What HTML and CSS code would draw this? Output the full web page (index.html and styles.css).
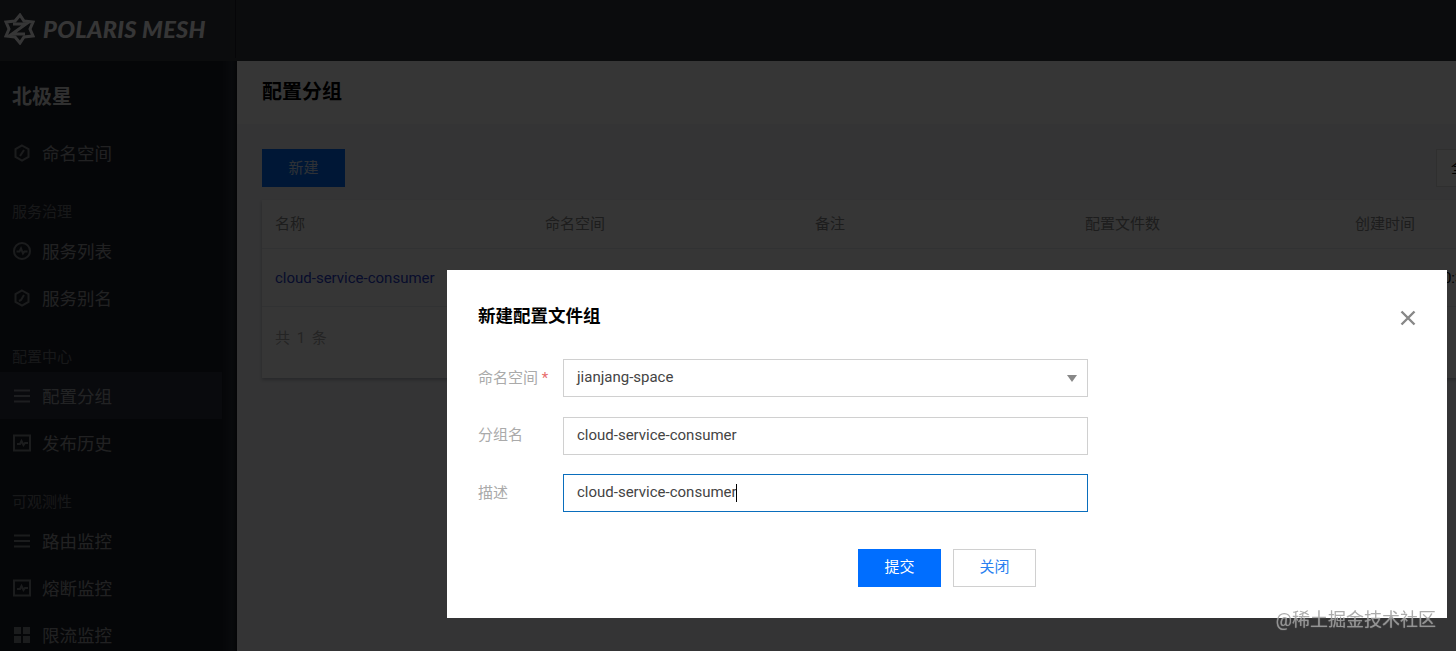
FILE: index.html
```html
<!DOCTYPE html>
<html>
<head>
	<title>配置分组</title>
	<meta charset="UTF-8">
	<link rel="stylesheet" href="styles.css">
</head>
<body>
	<div class="app">
		<header class="topbar">
			<div class="logo">
				<svg class="logo-mark" viewBox="0 0 32 32" width="32" height="32" fill="none" stroke="#fff" stroke-width="3" stroke-linejoin="miter">
					<path d="M17 2l4 6 9 1-3 7 3 7-9 1-4 6-5-6-9-1 3-7-3-7 9-1z"/>
					<path d="M10 11h13l-14 10h13"/>
				</svg>
				<span class="logo-text">POLARIS MESH</span>
			</div>
		</header>
		<div class="body">
			<nav class="sidebar">
				<div class="brand">北极星</div>
				<a class="nav-item">
					<svg class="nav-icon" viewBox="0 0 18 18"><path d="M9 1.5l6.5 3.7v7.6L9 16.5l-6.5-3.7V5.2z"/><path d="M11 6l-4 6"/></svg>
					命名空间
				</a>
				<div class="nav-group">服务治理</div>
				<a class="nav-item">
					<svg class="nav-icon" viewBox="0 0 18 18"><circle cx="9" cy="9" r="8"/><path d="M3.5 9.5h3l1.5-3 2 5 1.5-2h3"/></svg>
					服务列表
				</a>
				<a class="nav-item">
					<svg class="nav-icon" viewBox="0 0 18 18"><path d="M9 1.5l6.5 3.7v7.6L9 16.5l-6.5-3.7V5.2z"/><path d="M11 6l-3 5-2 1"/></svg>
					服务别名
				</a>
				<div class="nav-group">配置中心</div>
				<a class="nav-item active">
					<svg class="nav-icon" viewBox="0 0 18 18"><path d="M1 3.5h16M1 9h16M1 14.5h16"/></svg>
					配置分组
				</a>
				<a class="nav-item">
					<svg class="nav-icon" viewBox="0 0 18 18"><path d="M1 1.5h16v15H1z"/><path d="M4 10h3l1.5-3 2 4 1.5-2h3"/></svg>
					发布历史
				</a>
				<div class="nav-group">可观测性</div>
				<a class="nav-item">
					<svg class="nav-icon" viewBox="0 0 18 18"><path d="M1 3.5h16M1 9h16M1 14.5h16"/></svg>
					路由监控
				</a>
				<a class="nav-item">
					<svg class="nav-icon" viewBox="0 0 18 18"><path d="M1 1.5h16v15H1z"/><path d="M4 10h3l1.5-3 2 4 1.5-2h3"/></svg>
					熔断监控
				</a>
				<a class="nav-item">
					<svg class="nav-icon solid" viewBox="0 0 18 18"><path d="M1 1h7v7H1zM10 1h7v7h-7zM1 10h7v7H1zM10 10h7v7h-7z"/></svg>
					限流监控
				</a>
			</nav>
			<main class="main">
				<div class="page-title">配置分组</div>
				<div class="content">
					<div class="toolbar">
						<button class="btn-new">新建</button>
						<div class="search-box">全部</div>
					</div>
					<div class="card">
						<div class="row head">
							<div>名称</div>
							<div>命名空间</div>
							<div>备注</div>
							<div>配置文件数</div>
							<div>创建时间</div>
						</div>
						<div class="row data">
							<div class="link">cloud-service-consumer</div>
							<div>jianjang-space</div>
							<div>-</div>
							<div>0</div>
							<div>2022-05-10 10:32:16</div>
						</div>
						<div class="card-foot">共 1 条</div>
					</div>
				</div>
			</main>
		</div>
	</div>

	<div class="mask"></div>

	<div class="dialog">
		<div class="dialog-head">
			<h3>新建配置文件组</h3>
			<svg class="dialog-close" viewBox="0 0 16 16" width="16" height="16"><path d="M1.5 1.5l13 13M14.5 1.5l-13 13"/></svg>
		</div>
		<div class="form">
			<label>命名空间 <em>*</em></label>
			<div class="field select">jianjang-space<i class="caret"></i></div>
			<label>分组名</label>
			<div class="field">cloud-service-consumer</div>
			<label>描述</label>
			<div class="field focus">cloud-service-consumer<i class="cursor"></i></div>
		</div>
		<div class="dialog-foot">
			<button class="btn primary">提交</button>
			<button class="btn plain">关闭</button>
		</div>
	</div>

	<div class="watermark">@稀土掘金技术社区</div>
</body>
</html>
```

FILE: styles.css
```css
* {
	box-sizing: border-box;
}

html, body {
	margin: 0;
	height: 100%;
	overflow: hidden;
}

body {
	font-family: Roboto, "Noto Sans CJK SC", sans-serif;
	color: #000;
	background: #f3f4f7;
}

.app {
	height: 651px;
	display: flex;
	flex-direction: column;
}

.topbar {
	height: 61px;
	flex: none;
	background: #34383f;
}

.logo {
	width: 236px;
	height: 58px;
	padding-left: 3px;
	display: flex;
	align-items: center;
	gap: 8px;
	border-right: 1px solid #1c1f28;
}

.logo-text {
	font-family: Lato, sans-serif;
	font-size: 23.5px;
	font-weight: 900;
	font-style: italic;
	letter-spacing: .3px;
	color: #fff;
}

.body {
	flex: 1;
	display: flex;
	min-height: 0;
}

.sidebar {
	width: 237px;
	flex: none;
	background: linear-gradient(to right, #1a1e27 222px, #2a303c 232px, #1a1e27);
	color: rgba(255, 255, 255, .58);
}

.brand {
	height: 68px;
	padding: 21px 0 0 12px;
	font-size: 20px;
	font-weight: 700;
	line-height: 30px;
	color: rgba(255, 255, 255, .9);
}

.nav-item {
	width: 222px;
	height: 47px;
	padding-left: 13px;
	display: flex;
	align-items: center;
	gap: 11px;
	font-size: 17.5px;
}

.nav-item.active {
	background: #2b2f3e;
}

.nav-icon {
	width: 18px;
	height: 18px;
	fill: none;
	stroke: rgba(255, 255, 255, .45);
	stroke-width: 2;
}

.nav-icon.solid {
	fill: rgba(255, 255, 255, .45);
	stroke: none;
}

.nav-group {
	height: 51px;
	padding: 25px 0 0 12px;
	font-size: 15px;
	line-height: 22px;
	color: rgba(255, 255, 255, .38);
}

.main {
	flex: 1;
	min-width: 0;
}

.page-title {
	height: 63px;
	padding-left: 25px;
	font-size: 20px;
	font-weight: 700;
	line-height: 62px;
	background: #fff;
}

.content {
	padding: 25px 0 0 25px;
}

.toolbar {
	height: 38px;
	display: flex;
	justify-content: space-between;
}

.btn-new {
	width: 83px;
	height: 38px;
	padding-bottom: 4px;
	border: 0;
	background: #006eff;
	color: #d8e6ff;
	font: 15px Roboto, "Noto Sans CJK SC", sans-serif;
}

.search-box {
	width: 100px;
	height: 38px;
	margin-right: -80px;
	padding-left: 14px;
	line-height: 36px;
	font-size: 15px;
	background: #fff;
	border: 1px solid #ddd;
}

.card {
	width: 1300px;
	height: 178px;
	margin-top: 13px;
	background: #fff;
	box-shadow: 0 2px 3px rgba(54, 58, 80, .3);
	font-size: 15px;
}

.row {
	display: grid;
	grid-template-columns: repeat(5, 270px);
	padding-left: 13px;
	align-items: center;
	border-bottom: 1px solid #e7eaef;
}

.row > div {
	white-space: nowrap;
}

.head {
	height: 49px;
	padding-bottom: 4px;
	color: #888;
}

.data {
	height: 58px;
}

.link {
	color: #2a3fd0;
}

.card-foot {
	padding: 19px 0 0 13px;
	color: #aaa;
	word-spacing: 3px;
}

.mask {
	position: fixed;
	inset: 0;
	background: rgba(0, 0, 0, .79);
}

.dialog {
	position: fixed;
	left: 447px;
	top: 270px;
	width: 1000px;
	height: 348px;
	padding: 32px 31px 0;
	background: #fff;
}

.dialog-head {
	height: 57px;
	display: flex;
	justify-content: space-between;
}

.dialog-head h3 {
	margin: 0;
	font-size: 17.5px;
	font-weight: 700;
	line-height: 28px;
}

.dialog-close {
	margin: 8px 0 0;
	fill: none;
	stroke: #888;
	stroke-width: 2.4;
}

.form {
	display: grid;
	grid-template-columns: 85px 525px;
	grid-auto-rows: 38px;
	row-gap: 19.5px;
	align-items: center;
	font-size: 15px;
}

.form label {
	padding-bottom: 4px;
	color: #aaa;
}

.form em {
	color: #e86c6c;
	font-style: normal;
}

.field {
	position: relative;
	height: 38px;
	padding-left: 13px;
	border: 1px solid #d0d0d0;
	line-height: 35px;
	color: #444;
}

.field.focus {
	border-color: #0a6ebd;
}

.caret {
	position: absolute;
	right: 10px;
	top: 15px;
	border: 5px solid transparent;
	border-top: 7px solid #888;
	border-bottom: 0;
}

.cursor {
	display: inline-block;
	width: 1px;
	height: 18px;
	margin-left: -1px;
	vertical-align: middle;
	background: #000;
}

.dialog-foot {
	width: 558px;
	margin-top: 37px;
	display: flex;
	justify-content: flex-end;
	gap: 12px;
}

.btn {
	width: 83px;
	height: 38px;
	padding-bottom: 6px;
	font: 15px Roboto, "Noto Sans CJK SC", sans-serif;
}

.btn.primary {
	border: 0;
	background: #006eff;
	color: #fff;
}

.btn.plain {
	border: 1px solid #d0d0d0;
	background: #fff;
	color: #2a80f0;
}

.watermark {
	position: fixed;
	right: 20px;
	top: 608px;
	font-size: 18px;
	line-height: 24px;
	color: rgba(150, 150, 150, .8);
	text-shadow: 0 0 1px rgba(255, 255, 255, .5);
}
```
